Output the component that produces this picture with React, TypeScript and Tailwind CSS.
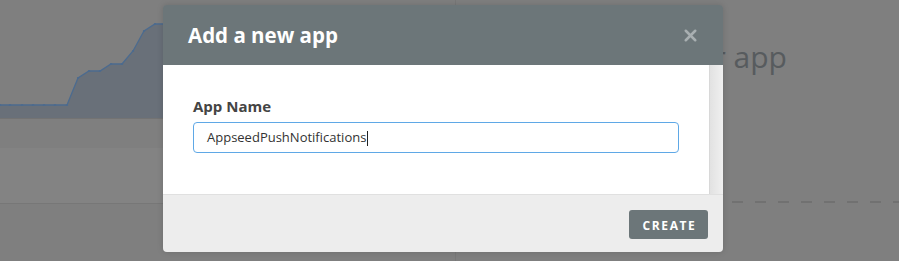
import { X } from 'lucide-react'

const points: [number, number][] = [
  [0, 105], [10, 105], [22, 105], [33, 105], [44, 105], [55, 105], [67, 105],
  [78, 78], [89, 71], [100, 71], [111, 64], [122, 64], [133, 51], [144, 31],
  [155, 24], [166, 24], [177, 24],
]

function Chart() {
  const line = points.map(([x, y]) => `${x},${y}`).join(' ')
  const area = `0,118 ${line} 177,118`
  return (
    <svg width="455" height="118" className="block">
      <polygon points={area} fill="#697079" />
      <polyline points={line} fill="none" stroke="#4c6b8f" strokeWidth="1.3" />
      {points.map(([x, y]) => (
        <circle key={x} cx={x} cy={y} r="1.1" fill="#4c6b8f" />
      ))}
    </svg>
  )
}

export default function App() {
  return (
    <div className="relative h-[261px] w-[899px] overflow-hidden bg-[#7f7f7f] font-['Open_Sans',sans-serif]">
      {/* dimmed page behind the dialog */}
      <div className="flex h-full">
        <div className="flex w-[455px] flex-col">
          <Chart />
          <div className="h-px bg-[#737373]" />
          <div className="h-[29px]" />
          <div className="h-[56px] border-b border-[#777777] bg-[#838383]" />
        </div>
        <div className="flex flex-1 flex-col border-l border-[#787878]">
          <div className="h-[5px]" />
          <h2 className="pl-[106px] pt-[34px] text-[30px] font-normal leading-[36px] text-[#575b5e]">Create your app</h2>
          <div className="mt-[126px] h-[2px] bg-[repeating-linear-gradient(90deg,#717171_0_11px,transparent_11px_23px)]" />
        </div>
      </div>

      {/* dialog */}
      <div className="absolute left-[163px] top-[5px] w-[560px] overflow-hidden rounded-[4px] shadow-[0_0_6px_rgba(0,0,0,0.15)]">
        <div className="flex h-[60px] items-center justify-between bg-[#6c7679] pl-[25px] pr-[23px]">
          <h1 className="text-[20.5px] font-bold leading-none text-white">Add a new app</h1>
          <X size={19} strokeWidth={3.2} className="text-[#a8afb1]" />
        </div>
        <div className="flex h-[129px] bg-white">
          <div className="flex-1 px-[30px] pt-[31px]">
            <label className="block text-[15px] font-bold leading-[20px] text-[#444444]">App Name</label>
            <div className="mt-[6px] flex h-[31px] items-center rounded-[4px] border border-[#5fa8e6] px-[13px] pt-px text-[13px] text-[#333333]">
              AppseedPushNotifications
              <span className="ml-px h-[15px] w-px bg-[#222222]" />
            </div>
          </div>
          <div className="w-[14px] border-l border-[#d8d8d8] bg-[linear-gradient(90deg,#e2e2e2,#f0f0f0)]" />
        </div>
        <div className="flex h-[58px] items-start justify-end border-t border-[#e0e0e0] bg-[#ededed] pr-[15px] pt-[15px]">
          <button className="h-[29px] w-[79px] rounded-[3px] bg-[#6c7679] pl-[2px] pt-[3px] text-[12px] font-bold tracking-[1.6px] text-white">
            CREATE
          </button>
        </div>
      </div>
    </div>
  )
}
